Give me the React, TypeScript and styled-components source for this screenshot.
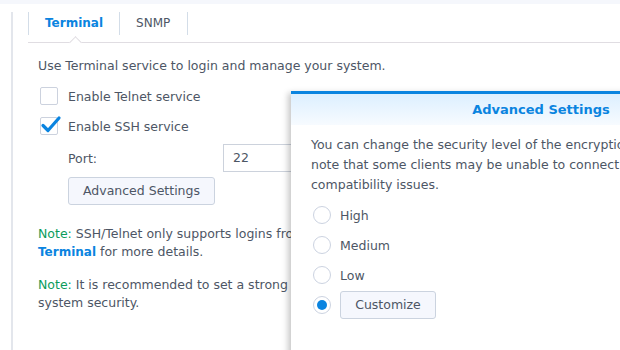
import styled, { createGlobalStyle } from "styled-components";

const GlobalStyle = createGlobalStyle`
  html, body {
    margin: 0;
    padding: 0;
    background: #fff;
    overflow: hidden;
    width: 620px;
    height: 350px;
  }
  body {
    font-family: "DejaVu Sans", Verdana, sans-serif;
    font-size: 12.5px;
    color: #4d5665;
  }
`;

function CheckIcon() {
  return (
    <svg width="22" height="20" viewBox="0 0 22 20">
      <path d="M3 10.5 L8 15.5 L19 3" fill="none" stroke="#0a84e0" strokeWidth="3.2" strokeLinecap="round" strokeLinejoin="round" />
    </svg>
  );
}

function App() {
  return (
    <>
      <GlobalStyle />
      <Page>
        <TopStrip />
        <Panel>
          <TabBar>
            <Tab $active>
              Terminal
              <Notch />
            </Tab>
            <Tab>SNMP</Tab>
          </TabBar>
          <Content>
            <Desc>Use Terminal service to login and manage your system.</Desc>
            <CheckRow>
              <Box />
              <span>Enable Telnet service</span>
            </CheckRow>
            <CheckRow>
              <Box>
                <CheckMark>
                  <CheckIcon />
                </CheckMark>
              </Box>
              <span>Enable SSH service</span>
            </CheckRow>
            <Indent>
              <FieldRow>
                <FieldLabel>Port:</FieldLabel>
                <Input>22</Input>
              </FieldRow>
              <Button>Advanced Settings</Button>
            </Indent>
            <Note>
              <Line>
                <Green>Note:</Green> SSH/Telnet only supports logins from accounts belonging to the administrators group. Please refer to
              </Line>
              <Line>
                <Link>Terminal</Link> for more details.
              </Line>
            </Note>
            <Note>
              <Line>
                <Green>Note:</Green> It is recommended to set a strong password for all administrator accounts to enhance
              </Line>
              <Line>system security.</Line>
            </Note>
          </Content>
        </Panel>

        <Dialog>
          <DialogHeader>Advanced Settings</DialogHeader>
          <DialogBody>
            <DialogText>
              <Line>You can change the security level of the encryption algorithms. Please</Line>
              <Line>note that some clients may be unable to connect after changing it due to</Line>
              <Line>compatibility issues.</Line>
            </DialogText>
            <RadioList>
              <RadioRow>
                <Radio />
                <span>High</span>
              </RadioRow>
              <RadioRow>
                <Radio />
                <span>Medium</span>
              </RadioRow>
              <RadioRow>
                <Radio />
                <span>Low</span>
              </RadioRow>
              <RadioRow>
                <Radio $checked />
                <SmallButton>Customize</SmallButton>
              </RadioRow>
            </RadioList>
          </DialogBody>
        </Dialog>
      </Page>
    </>
  );
}

const Page = styled.div`
  position: relative;
  width: 620px;
  height: 350px;
  overflow: hidden;
`;

const TopStrip = styled.div`
  height: 4px;
  background: #f5f7fc;
`;

const Panel = styled.div`
  margin: 8px 0 0 11px;
  height: 340px;
  border-left: 2px solid #e3e6ec;
  padding-left: 15px;
`;

const TabBar = styled.div`
  display: flex;
  height: 30px;
  border-bottom: 1px solid #e0dde2;
`;

const Tab = styled.div<{ $active?: boolean }>`
  position: relative;
  display: flex;
  align-items: center;
  justify-content: center;
  align-self: flex-start;
  height: 23px;
  padding: 0 16px;
  line-height: 23px;
  font-size: 12px;
  border-left: 1px solid #d3dde8;
  font-weight: ${({ $active }) => ($active ? "bold" : "normal")};
  color: ${({ $active }) => ($active ? "#0a84e0" : "#4d5665")};
  &:last-child {
    padding-right: 17px;
    border-right: 1px solid #d3dde8;
  }
`;

const Notch = styled.span`
  position: absolute;
  left: 50%;
  top: 26px;
  width: 8px;
  height: 8px;
  margin-left: -3px;
  background: #fff;
  border-left: 1px solid #e0dde2;
  border-top: 1px solid #e0dde2;
  transform: rotate(45deg);
`;

const Content = styled.div`
  padding: 15px 0 0 10px;
`;

const Desc = styled.div`
  line-height: 16px;
  margin-bottom: 13px;
  white-space: nowrap;
`;

const CheckRow = styled.div`
  display: flex;
  align-items: center;
  gap: 10px;
  height: 18px;
  margin: 0 0 12px 2px;
  white-space: nowrap;
`;

const Box = styled.span`
  position: relative;
  box-sizing: border-box;
  width: 18px;
  height: 18px;
  border: 1px solid #ccd2de;
  border-radius: 2px;
  background: #fff;
`;

const CheckMark = styled.span`
  position: absolute;
  left: -1px;
  top: -3px;
  display: flex;
`;

const Indent = styled.div`
  padding-left: 30px;
`;

const FieldRow = styled.div`
  display: flex;
  align-items: center;
  margin-top: -3px;
  height: 28px;
`;

const FieldLabel = styled.span`
  width: 155px;
`;

const Input = styled.div`
  box-sizing: border-box;
  width: 200px;
  height: 28px;
  line-height: 26px;
  border: 1px solid #ccd2dc;
  padding-left: 9px;
`;

const Button = styled.div`
  box-sizing: border-box;
  margin-top: 5px;
  width: 147px;
  height: 28px;
  line-height: 26px;
  text-align: center;
  border: 1px solid #cbd3df;
  border-radius: 3px;
  background: #f5f7fd;
`;

const Note = styled.div`
  margin-top: 20px;
  line-height: 18px;
  & + & {
    margin-top: 15px;
  }
`;

const Line = styled.div`
  white-space: nowrap;
`;

const Green = styled.span`
  color: #0b9c5c;
`;

const Link = styled.span`
  color: #0a84e0;
  font-weight: bold;
  font-size: 12px;
`;

const Dialog = styled.div`
  position: absolute;
  left: 291px;
  top: 91px;
  width: 500px;
  height: 300px;
  background: #fff;
  border-top: 3px solid #0a84e0;
  box-shadow: -3px 2px 6px rgba(0, 0, 0, 0.22);
`;

const DialogHeader = styled.div`
  height: 28px;
  padding-top: 3px;
  line-height: 26px;
  text-align: center;
  font-size: 13px;
  font-weight: bold;
  color: #0a84e0;
  background: linear-gradient(#dcefff, #f7fbff);
`;

const DialogBody = styled.div`
  padding: 10px 20px 0 20px;
`;

const DialogText = styled.div`
  line-height: 20px;
`;

const RadioList = styled.div`
  display: flex;
  flex-direction: column;
  gap: 12px;
  margin-top: 11px;
`;

const RadioRow = styled.div`
  display: flex;
  align-items: center;
  gap: 9px;
  height: 18px;
  padding-left: 2px;
`;

const Radio = styled.span<{ $checked?: boolean }>`
  position: relative;
  box-sizing: border-box;
  width: 18px;
  height: 18px;
  border: 1px solid #ccd3e1;
  border-radius: 50%;
  background: #fff;
  &::after {
    content: "";
    display: ${({ $checked }) => ($checked ? "block" : "none")};
    position: absolute;
    left: 3px;
    top: 3px;
    width: 10px;
    height: 10px;
    border-radius: 50%;
    background: #0a84e0;
  }
`;

const SmallButton = styled.span`
  box-sizing: border-box;
  width: 96px;
  height: 28px;
  line-height: 26px;
  text-align: center;
  border: 1px solid #cbd3df;
  border-radius: 3px;
  background: #f5f7fd;
`;

export default App;
